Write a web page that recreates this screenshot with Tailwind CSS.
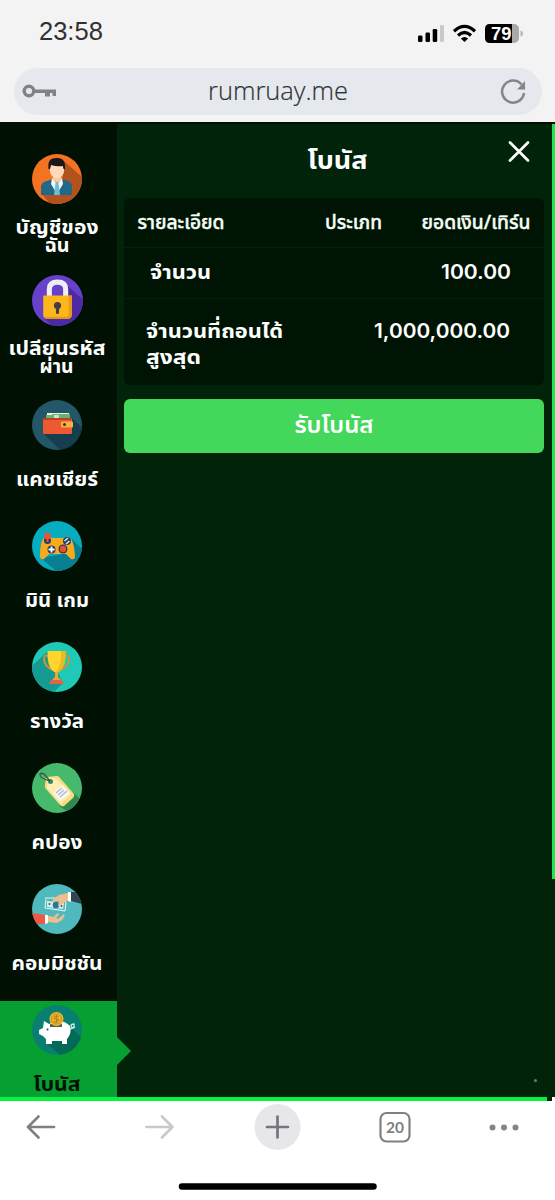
<!DOCTYPE html>
<html lang="th">
<head>
<meta charset="utf-8">
<title>โบนัส</title>
<script src="https://cdn.jsdelivr.net/npm/@tailwindcss/browser@4"></script>
</head>
<body class="w-[555px] h-[1200px] overflow-hidden bg-white font-['Noto_Sans','Noto_Sans_Thai',sans-serif]">
<div class="flex flex-col w-[555px] h-[1200px]">

<header class="h-[122px] shrink-0 bg-[#f3f3f3] flex flex-col">
  <div class="h-[68px] shrink-0 flex items-center justify-between pl-[39px] pr-[30px]">
    <span class="font-['Liberation_Sans',sans-serif] text-[25.500px] leading-none text-[#303030] -mt-1">23:58</span>
    <svg class="w-[108px] h-[24px] -mt-1" viewBox="0 0 108 24">
      <g fill="#000"><rect x="1" y="15.500" width="4.500" height="6.500" rx="1.200"/><rect x="8.500" y="12.500" width="4.500" height="9.500" rx="1.200"/><rect x="15.700" y="9" width="4.500" height="13" rx="1.200"/></g>
      <rect x="23" y="5" width="4" height="17" rx="1.200" fill="#c9c9c9"/>
      <g fill="none" stroke="#000" stroke-width="3.200"><path d="M37 11.200Q47.500 1.500 58 11.200"/><path d="M41 15.500Q47.500 9.500 54 15.500"/></g>
      <path d="M43.800 18.500Q47.500 15.500 51.200 18.500L47.500 22Z"/>
      <rect x="68" y="4" width="34" height="19" rx="5" fill="#a9a9a9"/>
      <path d="M73 4H95V23H73Q68 23 68 18V9Q68 4 73 4Z"/>
      <path d="M103.500 10.500Q106 11 106 13.500T103.500 16.500Z" fill="#b5b5b5"/>
      <text x="74" y="20.300" font-family="Liberation Sans" font-weight="700" font-size="19" textLength="20.500" lengthAdjust="spacingAndGlyphs" fill="#fff">79</text>
    </svg>
  </div>
  <div class="ml-[14px] w-[528px] h-[47px] shrink-0 rounded-full bg-[#e5e9ed] flex items-center justify-between pl-2 pr-[15px]">
    <svg class="w-9 h-5" viewBox="0 0 36 20"><circle cx="7" cy="9" r="4.800" fill="none" stroke="#808386" stroke-width="3.400"/><path d="M11 7.500H34V14H30.500V11H28V14.500H23V11H11Z" fill="#808386"/></svg>
    <svg class="w-[144px] h-9" viewBox="0 0 144 36"><text x="1" y="26" font-family="Open Sans" font-weight="300" font-size="26" textLength="140" lengthAdjust="spacingAndGlyphs" fill="#2e3338" stroke="#2e3338" stroke-width=".2">rumruay.me</text></svg>
    <svg class="w-7 h-7" viewBox="0 0 28 28"><path d="M22.500 6.500A11 11 0 1 0 25 15" fill="none" stroke="#82868a" stroke-width="2.500"/><path d="M26 3V11.500H18Z" fill="#82868a"/></svg>
  </div>
</header>

<div class="h-[975px] shrink-0 flex bg-[#00230a] border-t-2 border-[#001004]">
  <aside class="w-[117px] shrink-0 bg-[#001104] pt-[26px] flex flex-col text-center font-bold text-[19px] text-white">
    <div class="h-[121px] shrink-0 flex flex-col items-center pt-1 pr-[3px]">
      <svg class="w-[50px] h-[50px]" viewBox="0 0 50 50"><defs><clipPath id="disc"><circle cx="25" cy="25" r="25"/></clipPath></defs><g clip-path="url(#disc)"><path fill="#f37321" d="M0 0H50V50H0Z"/><path fill="#b3521c" d="M32 7L50 23V50H18L10 40L30 30Z"/><path fill="#21698b" d="M9 41V32Q10 28 15 27L20 25H30L36 27Q40 28 40 34V41Z"/><path fill="#f4f7f5" d="M20 24L25 30L30 24L31 30L25 40L19 30Z"/><path fill="#6bbfd0" d="M23.500 29H26.500L28 41H22Z"/><path fill="#fac9a4" d="M21 20H29V26L25 29L21 26Z"/><ellipse cx="25" cy="16" rx="7.200" ry="8.500" fill="#ffdab8"/><path fill="#1b1718" d="M16.500 15Q15 4 24 4Q34 3 33 15Q31 16 31 12Q25 13 19 11L18 15Z"/></g></svg>
      <svg class="w-[115px] h-[44px] mt-[5px] overflow-visible" viewBox="0 0 115 44" fill="#fff" text-anchor="middle"><text x="57" y="25" textLength="83" lengthAdjust="spacingAndGlyphs">บัญชีของ</text><text x="57" y="43" textLength="25" lengthAdjust="spacingAndGlyphs">ฉัน</text></svg>
    </div>
    <div class="h-[125px] shrink-0 flex flex-col items-center pt-1 pr-[3px]">
      <svg class="w-[51px] h-[51px]" viewBox="0 0 50 50"><g clip-path="url(#disc)"><path fill="#6841ca" d="M0 0H50V50H0Z"/><path fill="#4b2aa3" d="M34 10L50 24V50H20L12 43L35 40Z"/><path fill="none" stroke="#efedf5" stroke-width="5" d="M17 21V14Q17 7 25 7T33 14V21"/><path fill="#fbb71b" d="M11 20H39V39Q39 43 35 43H15Q11 43 11 39Z"/><path fill="#e89a17" d="M36 20H39V39Q39 43 35 43H15Q12 43 12 41H33Q36 41 36 38Z"/><circle cx="25" cy="30" r="3.500" fill="#453c44"/><path fill="#453c44" d="M23.500 30H26.500V38H23.500Z"/></g></svg>
      <svg class="w-[115px] h-[44px] mt-1 overflow-visible" viewBox="0 0 115 44" fill="#fff" text-anchor="middle"><text x="57" y="25" textLength="97" lengthAdjust="spacingAndGlyphs">เปลียนรหัส</text><text x="56.500" y="43" textLength="34" lengthAdjust="spacingAndGlyphs">ผ่าน</text></svg>
    </div>
    <div class="h-[121px] shrink-0 flex flex-col items-center pt-1 pr-[3px]">
      <svg class="w-[50px] h-[50px]" viewBox="0 0 50 50"><g clip-path="url(#disc)"><path fill="#235768" d="M0 0H50V50H0Z"/><path fill="#173e4e" d="M40 18L50 28V50H28L12 34Z"/><path fill="#eef2e9" d="M15 13H37V20H15Z"/><path fill="#66b26f" d="M14 15H34V20H14ZM20 14H38V18H20Z"/><path fill="#cfe4c1" d="M22 15H27V18H22Z"/><rect x="11" y="18" width="29" height="16" rx="1.500" fill="#ed5a32"/><path fill="#bf3f26" d="M11 18H39V20H11Z"/><rect x="29" y="21.500" width="12" height="6" rx="1" fill="#f4b23e"/><circle cx="32.500" cy="24.500" r="1.500" fill="#453227"/></g></svg>
      <svg class="w-[115px] h-[44px] mt-1 overflow-visible" viewBox="0 0 115 44" fill="#fff" text-anchor="middle"><text x="57" y="32" textLength="82" lengthAdjust="spacingAndGlyphs">แคชเชียร์</text></svg>
    </div>
    <div class="h-[121px] shrink-0 flex flex-col items-center pt-1 pr-[3px]">
      <svg class="w-[50px] h-[50px]" viewBox="0 0 50 50"><g clip-path="url(#disc)"><path fill="#08acbf" d="M0 0H50V50H0Z"/><path fill="#087f91" d="M40 18L50 28V50H24L9 37L37 32Z"/><path fill="#faa91d" d="M12 17Q18 15 20 17H31Q34 15 39 18Q42 21 43 35Q43 39 39 38L34 33H17L12 38Q8 39 8 35Q8 20 12 17Z"/><circle cx="15.500" cy="19.500" r="3.500" fill="#243e66"/><circle cx="15.500" cy="15" r="3.300" fill="#ee5030"/><path stroke="#ee5030" stroke-width="2" d="M15.500 17V21"/><circle cx="35" cy="20" r="4" fill="#243e66"/><path stroke="#c8ecf4" stroke-width="1.600" d="M32.500 20L36 17M34 23L37.500 20"/><circle cx="19.500" cy="28.500" r="4" fill="#243e66"/><path stroke="#fff" stroke-width="1.800" d="M16.500 28.500H22.500M19.500 25.500V31.500"/><circle cx="31" cy="28" r="4.500" fill="#243e66"/><circle cx="31" cy="28" r="3.200" fill="#e94f2e"/></g></svg>
      <svg class="w-[115px] h-[44px] mt-1 overflow-visible" viewBox="0 0 115 44" fill="#fff" text-anchor="middle"><text x="57" y="32" textLength="64" lengthAdjust="spacingAndGlyphs">มินิ เกม</text></svg>
    </div>
    <div class="h-[121px] shrink-0 flex flex-col items-center pt-1 pr-[3px]">
      <svg class="w-[50px] h-[50px]" viewBox="0 0 50 50"><g clip-path="url(#disc)"><path fill="#20c9b6" d="M0 0H50V50H0Z"/><path fill="#159b94" d="M16 9L0 24V50H22L31 41L25 29Z"/><path fill="none" stroke="#d4922c" stroke-width="2" d="M17 14Q12 12 12 17Q12 24 21 28M32 14Q37 12 37 17Q37 24 28 28"/><path fill="#ffd42d" d="M15.500 9H33.500Q34 24 28 29Q24.500 32 21 29Q15 24 15.500 9Z"/><path fill="#eabb20" d="M29 9H33.500Q34 24 28 29Q26 31 24 30Q30 23 29 9Z"/><path fill="#f3a52b" d="M23 30H26V35L29 38H20L23 35Z"/><path fill="#df6545" d="M19 38H30L32 42H17Z"/></g></svg>
      <svg class="w-[115px] h-[44px] mt-1 overflow-visible" viewBox="0 0 115 44" fill="#fff" text-anchor="middle"><text x="57" y="32" textLength="54" lengthAdjust="spacingAndGlyphs">รางวัล</text></svg>
    </div>
    <div class="h-[121px] shrink-0 flex flex-col items-center pt-1 pr-[3px]">
      <svg class="w-[50px] h-[50px]" viewBox="0 0 50 50"><g clip-path="url(#disc)"><path fill="#46b96c" d="M0 0H50V50H0Z"/><path fill="#318b50" d="M41 29L50 38V50H38L27 43Z"/><path fill="#f8dc82" d="M14 14L25 13Q27 13 28 15L42 31Q43 33 41 35L32 43Q30 44 28 42L14 26Q12 24 13 22Z"/><path fill="#ffeeb4" d="M16 15L24 15L39 31L29 41L15 25Z"/><circle cx="18.500" cy="18.500" r="2.500" fill="#398d66"/><path fill="none" stroke="#3e5142" stroke-width="1.300" d="M18 18Q7 15 8 11Q10 9 13 12L18 18"/><path fill="#f7f7f6" d="M22 30L31 22L38 30L28 38Z"/><path stroke="#a9b8cd" stroke-width="1.200" d="M24 30L30 25M26 32L32 27M28 34L35 28"/></g></svg>
      <svg class="w-[115px] h-[44px] mt-1 overflow-visible" viewBox="0 0 115 44" fill="#fff" text-anchor="middle"><text x="57" y="32" textLength="51" lengthAdjust="spacingAndGlyphs">คปอง</text></svg>
    </div>
    <div class="h-[121px] shrink-0 flex flex-col items-center pt-1 pr-[3px]">
      <svg class="w-[50px] h-[50px]" viewBox="0 0 50 50"><g clip-path="url(#disc)"><path fill="#50b9bd" d="M0 0H50V50H0Z"/><path fill="#344252" d="M38 8H50V20L39 17Z"/><path fill="#fff" d="M36 8H39V18L36 17Z"/><path fill="none" stroke="#e7f6f7" stroke-width="1" d="M13 14H23M31 17L34 18L33 27L13 24L14 15"/><path fill="#dceced" d="M15 17L32 19L31 25L15 23Z"/><circle cx="24" cy="21" r="3.300" fill="#247a8b"/><circle cx="17.500" cy="20" r="1" fill="#186474"/><circle cx="29.500" cy="22" r="1" fill="#186474"/><path fill="#f0bd8e" d="M36 9L27 11L21 15L20 18L27 17L26 22L28 22L34 17L36 17Z"/><path fill="#ef5944" d="M0 29L13 31V40H4L0 37Z"/><path fill="#fff" d="M13 31H16V39L13 40Z"/><path fill="#f0bd8e" d="M16 32L23 33L26 35L32 30Q34 31 30 36L25 39L16 38ZM22 32L26 29L27 31L24 34Z"/></g></svg>
      <svg class="w-[115px] h-[44px] mt-1 overflow-visible" viewBox="0 0 115 44" fill="#fff" text-anchor="middle"><text x="57" y="32" textLength="91" lengthAdjust="spacingAndGlyphs">คอมมิชชัน</text></svg>
    </div>
    <div class="relative h-[96px] shrink-0 flex flex-col items-center pt-1 pr-[3px] bg-[#069f31]">
      <svg class="w-[50px] h-[50px] shrink-0" viewBox="0 0 50 50"><g clip-path="url(#disc)"><path fill="#087f70" d="M0 0H50V50H0Z"/><path fill="#056957" d="M37 21L50 33V50H28L14 38Z"/><path fill="#fff" d="M12 16L17 19Q29 12 38 21Q40 29 35 34V39H30V36H20V39H14V34L11 31L7 29V25L11 23Z"/><path d="M18 19H30V22H18Z" fill="#4f654d"/><circle cx="24.500" cy="14" r="7" fill="#edb62b"/><circle cx="24.500" cy="14" r="5" fill="none" stroke="#c78d20"/><path fill="none" stroke="#b88220" stroke-width="1.200" d="M26.500 12Q24 10 22.500 12T25 14T24 17Q22 17 22 16M24.500 10V18"/><circle cx="15.500" cy="24.500" r="1" fill="#1d4942"/><path fill="none" stroke="#c9ece5" stroke-width="1.300" d="M38 24Q43 23 42 19Q39 19 39 21Q40 24 43 22"/></g></svg>
      <svg class="w-[115px] h-[38px] shrink-0 mt-1 overflow-visible" viewBox="0 0 115 38" fill="#001004" text-anchor="middle"><text x="57" y="32" textLength="47" lengthAdjust="spacingAndGlyphs">โบนัส</text></svg>
      <svg class="absolute left-[116px] top-[35px] w-4 h-[30px]" viewBox="0 0 16 30"><path fill="#069f31" d="M0 0L15 15L0 30Z"/></svg>
    </div>
  </aside>

  <main class="relative flex-1 flex flex-col pl-[7px] pr-[11px] text-white">
    <h1 class="h-[74px] shrink-0 flex justify-center items-center">
      <svg class="w-[420px] h-[74px] overflow-visible" viewBox="0 0 420 74" fill="#fff"><text x="183.500" y="45" font-size="25" font-weight="700" textLength="60" lengthAdjust="spacingAndGlyphs">โบนัส</text><path d="M386 18.500L404 36.500M404 18.500L386 36.500" fill="none" stroke="#fff" stroke-width="2.700" stroke-linecap="round"/></svg>
    </h1>
    <section class="h-[187px] shrink-0 flex flex-col rounded-md overflow-hidden bg-[#001404]">
      <div class="h-[50px] shrink-0 border-b border-[#00210a]"><svg class="w-[420px] h-12" viewBox="0 0 420 48" fill="#f3fff5" stroke="#f3fff5" stroke-width=".4" font-size="19" font-weight="500"><text x="13.500" y="30.500" textLength="87" lengthAdjust="spacingAndGlyphs">รายละเอียด</text><text x="201" y="30.500" textLength="57" lengthAdjust="spacingAndGlyphs">ประเภท</text><text x="297.500" y="30.500" textLength="109" lengthAdjust="spacingAndGlyphs">ยอดเงิน/เทิร์น</text></svg></div>
      <div class="h-[51px] shrink-0 border-b border-[#00210a]"><svg class="w-[420px] h-[50px]" viewBox="0 0 420 50" fill="#fff" font-size="20" font-weight="700"><text x="26" y="31" textLength="61" lengthAdjust="spacingAndGlyphs">จำนวน</text><text x="317" y="31" font-family="Inter" font-weight="600" textLength="70" lengthAdjust="spacingAndGlyphs">100.00</text></svg></div>
      <div class="flex-1"><svg class="w-[420px] h-[86px]" viewBox="0 0 420 86" fill="#fff" font-size="20" font-weight="700"><text x="22" y="38.500" textLength="137" lengthAdjust="spacingAndGlyphs">จำนวนที่ถอนได้</text><text x="22" y="65" textLength="55" lengthAdjust="spacingAndGlyphs">สูงสุด</text><text x="250" y="38.500" font-family="Inter" font-weight="600" textLength="136" lengthAdjust="spacingAndGlyphs">1,000,000.00</text></svg></div>
    </section>
    <button class="mt-[14px] h-[54px] shrink-0 rounded-md bg-[#43d85b]"><svg class="w-[420px] h-[54px]" viewBox="0 0 420 54" fill="#fff"><text x="170.500" y="34" font-size="23" font-weight="600" textLength="79" lengthAdjust="spacingAndGlyphs">รับโบนัส</text></svg></button>
    <i class="absolute right-[18px] bottom-[15px] w-[3px] h-[3px] rounded-full bg-[#66806a]"></i>
    <i class="absolute right-0 top-0 w-[3px] h-[755px] bg-[#17ea50]"></i>
  </main>
</div>
<div class="h-[4px] shrink-0 flex bg-white"><i class="w-[547px] bg-[#06f344]"></i><i class="w-[5px] h-1 bg-[#00230a]"></i></div>

<footer class="flex-1 flex flex-col bg-white">
  <svg class="w-[555px] h-[99px]" viewBox="0 1101 555 99" fill="none" stroke-linecap="round" stroke-linejoin="round">
    <path d="M54 1127H28M38.500 1116.500L28 1127L38.500 1137.500" stroke="#808080" stroke-width="2.700"/>
    <path d="M146.500 1127H172.500M162 1116.500L172.500 1127L162 1137.500" stroke="#c9c9c9" stroke-width="2.700"/>
    <circle cx="277.500" cy="1127" r="23" fill="#e7e6eb"/><path d="M267 1127H288M277.500 1116.500V1137.500" stroke="#73767a" stroke-width="2.700"/>
    <rect x="380.500" y="1113" width="29" height="28.500" rx="6" stroke="#808080" stroke-width="2.200"/>
    <text x="395" y="1133" text-anchor="middle" font-family="Lato" font-weight="700" font-size="15.500" fill="#808080">20</text>
    <g fill="#858585"><circle cx="492.500" cy="1127.500" r="3"/><circle cx="504" cy="1127.500" r="3"/><circle cx="515.500" cy="1127.500" r="3"/></g>
    <path d="M182 1186.500H373.500" stroke="#000" stroke-width="6.500"/>
  </svg>
</footer>
</div>
</body>
</html>
